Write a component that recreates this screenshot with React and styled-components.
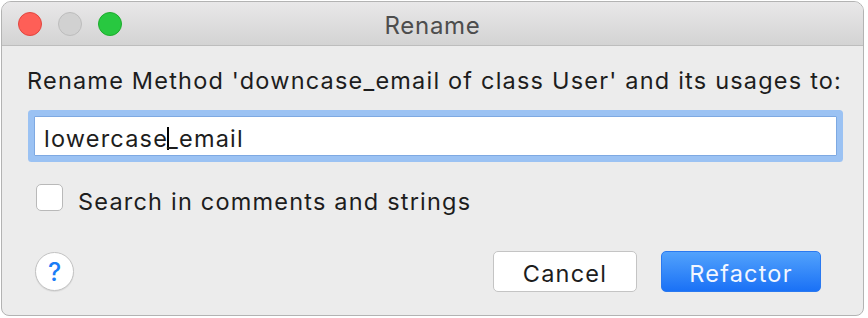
import React from 'react'
import styled, { createGlobalStyle } from 'styled-components'

const GlobalStyle = createGlobalStyle`
  html, body {
    margin:0;
    padding:0;
    background:#ffffff;
  }
  body {
    padding:1px 0 0 1px;
    font-family:Inter, "Liberation Sans", sans-serif;
  }
`

const Window = styled.div`
  width:863px;
  height:315px;
  box-sizing:border-box;
  border:1px solid #b3b3b3;
  border-radius:10px 10px 8px 8px;
  background:#ececec;
  overflow:hidden;
  display:flex;
  flex-direction:column;
`

const TitleBar = styled.div`
  height:43px;
  flex:none;
  position:relative;
  display:flex;
  align-items:center;
  justify-content:center;
  background:linear-gradient(#e9e8e9, #d3d3d3);
  border-bottom:1px solid #bdbdbd;
`

const Lights = styled.div`
  position:absolute;
  left:16px;
  top:10px;
  display:flex;
  gap:16px;
`

const Light = styled.span`
  width:24px;
  height:24px;
  box-sizing:border-box;
  border-radius:50%;
  background:${props => props.color};
  border:1px solid ${props => props.edge};
`

const Title = styled.div`
  font-size:24px;
  letter-spacing:0.7px;
  color:#4d4d4d;
  padding-top:3px;
`

const Body = styled.div`
  flex:1;
  display:flex;
  flex-direction:column;
  padding:22px 26px 0 25px;
`

const Text = styled.span`
  font-size:23.5px;
  letter-spacing:1.2px;
  line-height:26px;
  color:#1d1d1d;
  white-space:nowrap;
`

const Field = styled.div`
  margin:22px 0 0 7px;
  height:40px;
  box-sizing:border-box;
  border:1px solid #7ea9e2;
  border-radius:1px;
  box-shadow:0 0 0 6px #9bc2f3;
  background:#ffffff;
  padding:9px 10px 0 9px;
  display:flex;
`

const Caret = styled.span`
  display:inline-block;
  width:2px;
  height:23px;
  margin:1px -2px 0 -1px;
  background:#000;
`

const CheckRow = styled.label`
  margin:28px 0 0 9px;
  display:flex;
  align-items:flex-start;
  gap:15px;
`

const Box = styled.span`
  width:27px;
  height:27px;
  box-sizing:border-box;
  border:1px solid #b9b9b9;
  border-radius:5px;
  background:#ffffff;
`

const CheckText = styled(Text)`
  margin-top:5px;
`

const Footer = styled.div`
  margin:36px 16px 0 8px;
  display:flex;
  align-items:center;
`

const Help = styled.button`
  width:39px;
  height:39px;
  border-radius:50%;
  border:1px solid #c2c2c2;
  background:#ffffff;
  color:#1a7df6;
  font-family:inherit;
  font-size:25px;
  font-weight:500;
  padding:0;
  display:flex;
  align-items:center;
  justify-content:center;
  box-shadow:0 1px 1px rgba(0,0,0,0.08);
`

const Spacer = styled.div`
  flex:1;
`

const Button = styled.button`
  width:${props => props.width}px;
  height:41px;
  box-sizing:border-box;
  border-radius:5px;
  font-family:inherit;
  font-size:23.5px;
  letter-spacing:1.2px;
  line-height:26px;
  padding:4px 0 0 0;
  display:flex;
  justify-content:center;
  align-items:center;
  border:1px solid ${props => props.primary ? '#2a79f0' : '#c4c4c4'};
  background:${props => props.primary ? 'linear-gradient(#52a2fc, #1a71f6)' : '#ffffff'};
  color:${props => props.primary ? '#f2f6ff' : '#1d1d1d'};
  & + & {
    margin-left:24px;
  }
`

export default function App() {
  return (
    <>
      <GlobalStyle />
      <Window>
        <TitleBar>
          <Lights>
            <Light color="#fe5f57" edge="#e2463f" />
            <Light color="#d1d1d1" edge="#bdbdbd" />
            <Light color="#28c840" edge="#1dac2c" />
          </Lights>
          <Title>Rename</Title>
        </TitleBar>
        <Body>
          <Text>Rename Method 'downcase_email of class User' and its usages to:</Text>
          <Field>
            <Text>lowercase</Text>
            <Caret />
            <Text>_email</Text>
          </Field>
          <CheckRow>
            <Box />
            <CheckText>Search in comments and strings</CheckText>
          </CheckRow>
          <Footer>
            <Help>?</Help>
            <Spacer />
            <Button width={144}>Cancel</Button>
            <Button width={160} primary>Refactor</Button>
          </Footer>
        </Body>
      </Window>
    </>
  )
}
